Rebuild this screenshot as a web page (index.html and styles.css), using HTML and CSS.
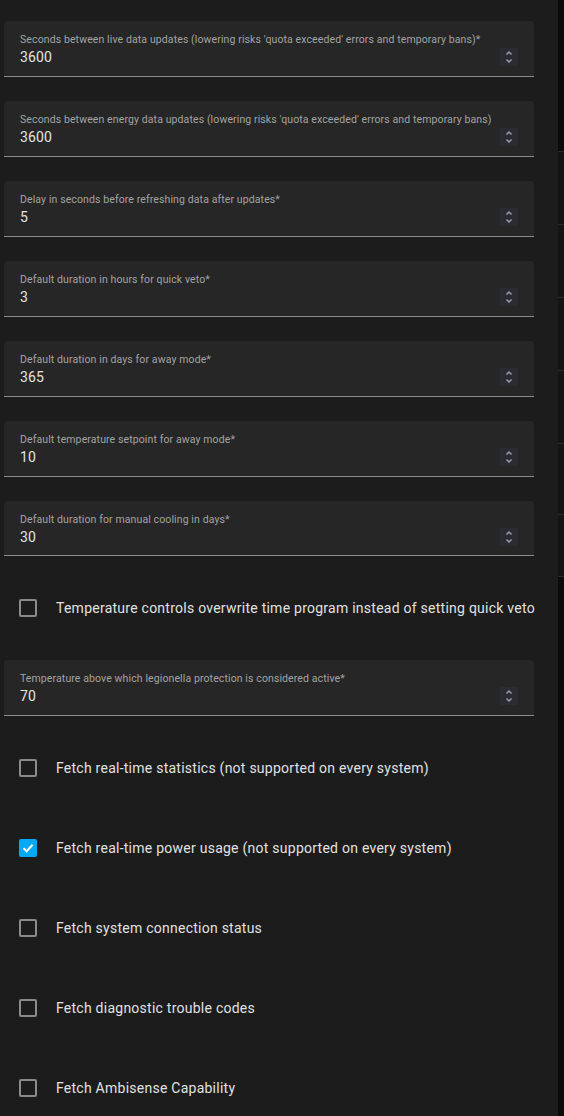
FILE: index.html
```html
<!DOCTYPE html>
<html>
<head>
<meta charset="utf-8">
<link rel="stylesheet" href="styles.css">
</head>
<body>
<div class="page">
  <div class="form">
    <div class="field"><span class="label">Seconds between live data updates (lowering risks 'quota exceeded' errors and temporary bans)*</span><span class="value">3600</span><span class="spin"><svg width="18" height="18" viewBox="0 0 18 18"><path d="M6.5 6.5 9 4l2.5 2.5M6.5 11.5 9 14l2.5-2.5" fill="none" stroke="#9c9ca8" stroke-width="1.5"/></svg></span></div>
    <div class="field"><span class="label">Seconds between energy data updates (lowering risks 'quota exceeded' errors and temporary bans)</span><span class="value">3600</span><span class="spin"><svg width="18" height="18" viewBox="0 0 18 18"><path d="M6.5 6.5 9 4l2.5 2.5M6.5 11.5 9 14l2.5-2.5" fill="none" stroke="#9c9ca8" stroke-width="1.5"/></svg></span></div>
    <div class="field"><span class="label">Delay in seconds before refreshing data after updates*</span><span class="value">5</span><span class="spin"><svg width="18" height="18" viewBox="0 0 18 18"><path d="M6.5 6.5 9 4l2.5 2.5M6.5 11.5 9 14l2.5-2.5" fill="none" stroke="#9c9ca8" stroke-width="1.5"/></svg></span></div>
    <div class="field"><span class="label">Default duration in hours for quick veto*</span><span class="value">3</span><span class="spin"><svg width="18" height="18" viewBox="0 0 18 18"><path d="M6.5 6.5 9 4l2.5 2.5M6.5 11.5 9 14l2.5-2.5" fill="none" stroke="#9c9ca8" stroke-width="1.5"/></svg></span></div>
    <div class="field"><span class="label">Default duration in days for away mode*</span><span class="value">365</span><span class="spin"><svg width="18" height="18" viewBox="0 0 18 18"><path d="M6.5 6.5 9 4l2.5 2.5M6.5 11.5 9 14l2.5-2.5" fill="none" stroke="#9c9ca8" stroke-width="1.5"/></svg></span></div>
    <div class="field"><span class="label">Default temperature setpoint for away mode*</span><span class="value">10</span><span class="spin"><svg width="18" height="18" viewBox="0 0 18 18"><path d="M6.5 6.5 9 4l2.5 2.5M6.5 11.5 9 14l2.5-2.5" fill="none" stroke="#9c9ca8" stroke-width="1.5"/></svg></span></div>
    <div class="field"><span class="label">Default duration for manual cooling in days*</span><span class="value">30</span><span class="spin"><svg width="18" height="18" viewBox="0 0 18 18"><path d="M6.5 6.5 9 4l2.5 2.5M6.5 11.5 9 14l2.5-2.5" fill="none" stroke="#9c9ca8" stroke-width="1.5"/></svg></span></div>
    <div class="check"><span class="box"></span><span class="text">Temperature controls overwrite time program instead of setting quick veto</span></div>
    <div class="field"><span class="label">Temperature above which legionella protection is considered active*</span><span class="value">70</span><span class="spin"><svg width="18" height="18" viewBox="0 0 18 18"><path d="M6.5 6.5 9 4l2.5 2.5M6.5 11.5 9 14l2.5-2.5" fill="none" stroke="#9c9ca8" stroke-width="1.5"/></svg></span></div>
    <div class="check"><span class="box"></span><span class="text">Fetch real-time statistics (not supported on every system)</span></div>
    <div class="check"><span class="box checked"><svg width="14" height="14" viewBox="0 0 14 14"><path d="M2.5 7.2 5.6 10.2 11.6 3.8" fill="none" stroke="#fff" stroke-width="2"/></svg></span><span class="text">Fetch real-time power usage (not supported on every system)</span></div>
    <div class="check"><span class="box"></span><span class="text">Fetch system connection status</span></div>
    <div class="check"><span class="box"></span><span class="text">Fetch diagnostic trouble codes</span></div>
    <div class="check"><span class="box"></span><span class="text">Fetch Ambisense Capability</span></div>
  </div>
  <div class="strip">
    <div class="seg top"></div>
    <div class="seg s73"></div>
    <div class="seg s73"></div>
    <div class="seg s73"></div>
    <div class="seg s73"></div>
    <div class="seg s71"></div>
    <div class="seg s62"></div>
    <div class="seg bottom"></div>
  </div>
</div>
</body>
</html>
```
FILE: styles.css
```css
html, body {
  margin: 0;
  padding: 0;
  background: #1c1c1c;
  font-family: Roboto, "Noto Sans", sans-serif;
}
.page {
  display: flex;
  width: 564px;
  height: 1116px;
  overflow: hidden;
}
.form {
  width: 530px;
  padding: 21px 24px 0 4px;
  display: flex;
  flex-direction: column;
  gap: 24px;
  flex: none;
}
.field {
  position: relative;
  height: 55px;
  background: #262626;
  border-radius: 4px 4px 0 0;
  border-bottom: 1px solid #8c8c8c;
  display: flex;
  flex-direction: column;
  padding-left: 16px;
  box-sizing: content-box;
}
.label {
  margin-top: 13px;
  font-size: 10.5px;
  letter-spacing: 0.11px;
  line-height: 12px;
  color: #a3a3a3;
  white-space: nowrap;
}
.value {
  margin-top: 2px;
  font-size: 14px;
  letter-spacing: 0.15px;
  line-height: 18px;
  color: #e3e3e3;
}
.spin {
  position: absolute;
  right: 16px;
  top: 27px;
  width: 18px;
  height: 18px;
  background: #2b2b34;
  display: flex;
}
.check {
  height: 56px;
  display: flex;
  align-items: center;
}
.box {
  width: 14px;
  height: 14px;
  margin-left: 15px;
  border: 2px solid #8a8a8a;
  border-radius: 2px;
  display: flex;
  align-items: center;
  justify-content: center;
  flex: none;
}
.box.checked {
  background: #03a9f4;
  border-color: #03a9f4;
}
.text {
  margin-left: 19px;
  font-size: 14px;
  letter-spacing: 0.25px;
  color: #e1e1e1;
  white-space: nowrap;
}
.strip {
  width: 6px;
  flex: none;
  display: flex;
  flex-direction: column;
}
.seg {
  background: #141414;
  border-top: 1px solid #2a2a2a;
  box-sizing: border-box;
}
.seg.top { height: 151px; background: #0b0b0b; border-top: none; }
.s73 { height: 73px; }
.s71 { height: 71px; }
.s62 { height: 62px; }
.seg.bottom { flex: 1; background: #0b0b0b; }
```
